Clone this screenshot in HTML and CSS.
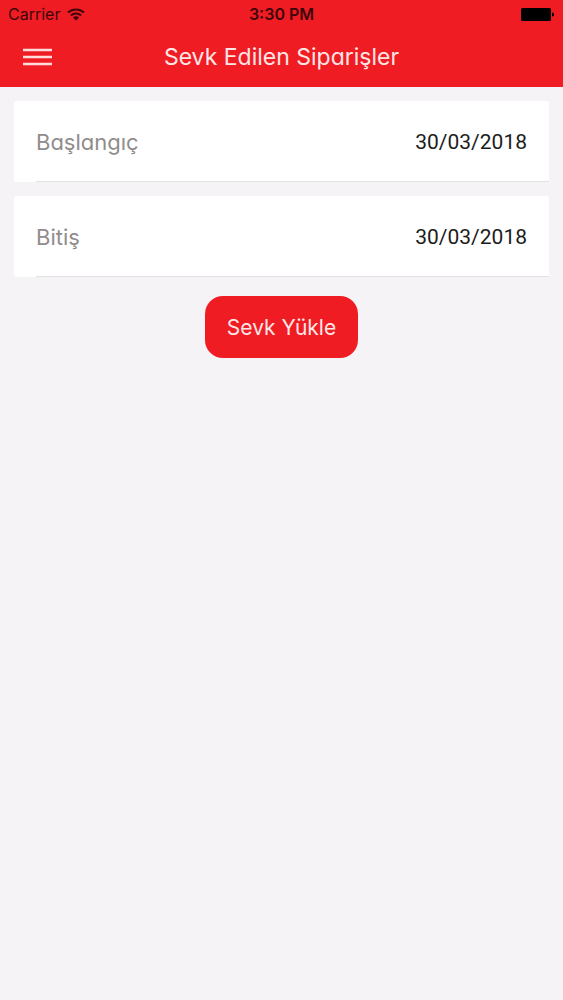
FILE: index.html
```html
<!DOCTYPE html>
<html lang="tr">
<head>
<meta charset="utf-8">
<meta name="viewport" content="width=device-width, initial-scale=1">
<title>Sevk Edilen Siparişler</title>
<link rel="stylesheet" href="styles.css">
</head>
<body>
<header class="header">
  <div class="status">
    <div class="carrier">
      <span>Carrier</span>
      <svg class="wifi" viewBox="0 0 18 13" aria-hidden="true">
        <path d="M1 4.600C5.500 0.400 12.500 0.400 17 4.600M3.800 7.400C6.800 4.700 11.200 4.700 14.200 7.400" fill="none" stroke="currentColor" stroke-width="2"/>
        <path d="M9 12.500L5.900 9.400C7.700 7.900 10.300 7.900 12.100 9.400Z" fill="currentColor"/>
      </svg>
    </div>
    <span class="time">3:30 PM</span>
    <svg class="battery" viewBox="0 0 34 13" aria-hidden="true">
      <rect width="30" height="13" rx="1.500"/>
      <path d="M31 4.500C33.800 4.500 33.800 8.500 31 8.500Z"/>
    </svg>
  </div>
  <div class="navbar">
    <button class="menu" type="button" aria-label="Menü">
      <svg class="menu-icon" viewBox="0 0 29 18" aria-hidden="true">
        <path d="M0 2H29M0 9H29M0 16H29" stroke="currentColor" stroke-width="2.600"/>
      </svg>
    </button>
    <h1 class="title">Sevk Edilen Siparişler</h1>
  </div>
</header>
<main>
  <form class="form">
    <div class="field">
      <label class="label" for="start">Başlangıç</label>
      <input class="date" id="start" type="text" value="30/03/2018">
    </div>
    <div class="field">
      <label class="label" for="end">Bitiş</label>
      <input class="date" id="end" type="text" value="30/03/2018">
    </div>
    <button class="submit" type="button">Sevk Yükle</button>
  </form>
</main>
</body>
</html>
```
FILE: styles.css
```css
* {
  box-sizing: border-box;
}

body {
  margin: 0;
  min-height: 100vh;
  background: #f5f3f5;
  font-family: Inter, "Open Sans", sans-serif;
}

.header {
  background: #f01c24;
}

.status {
  display: grid;
  grid-template-columns: 1fr auto 1fr;
  align-items: center;
  height: 28px;
  padding: 0 8px;
  color: #3d070a;
  font-size: 16px;
}

.carrier {
  display: flex;
  align-items: center;
  gap: 7px;
}

.wifi {
  width: 18px;
  height: 13px;
}

.time {
  font-weight: 600;
}

.battery {
  justify-self: end;
  width: 34px;
  height: 13px;
  fill: #000;
}

.navbar {
  display: grid;
  grid-template-columns: 60px 1fr 60px;
  align-items: center;
  height: 59px;
  padding-bottom: 2px;
}

.menu {
  display: flex;
  justify-content: flex-end;
  padding: 8px;
  border: 0;
  background: none;
  color: #ffdcdc;
}

.menu-icon {
  width: 29px;
  height: 18px;
}

/* cv11 selects the single-storey "a" */
.title,
.label,
.submit {
  font-weight: 400;
  font-feature-settings: "cv11";
}

.title {
  margin: 0;
  color: #ffe6e6;
  font-size: 23px;
  text-align: center;
}

.form {
  display: flex;
  flex-direction: column;
  gap: 14px;
  padding: 14px;
}

.field {
  position: relative;
  display: flex;
  align-items: center;
  justify-content: space-between;
  height: 81px;
  padding: 0 22px;
  border-radius: 3px;
  background: #fff;
}

.field::after {
  content: "";
  position: absolute;
  right: 0;
  bottom: 0;
  left: 22px;
  height: 1px;
  background: #e4e2e5;
}

.label {
  color: #918c8c;
  font-size: 22px;
}

.date {
  width: 160px;
  padding: 0;
  border: 0;
  background: none;
  color: #1c1c20;
  font-family: Roboto, sans-serif;
  font-size: 21px;
  font-weight: 400;
  text-align: right;
}

.submit {
  align-self: center;
  height: 62px;
  margin-top: 5px;
  padding: 0 22px;
  border: 0;
  border-radius: 18px;
  background: #f01c24;
  color: #ffe6e6;
  font-family: inherit;
  font-size: 21px;
}
```
